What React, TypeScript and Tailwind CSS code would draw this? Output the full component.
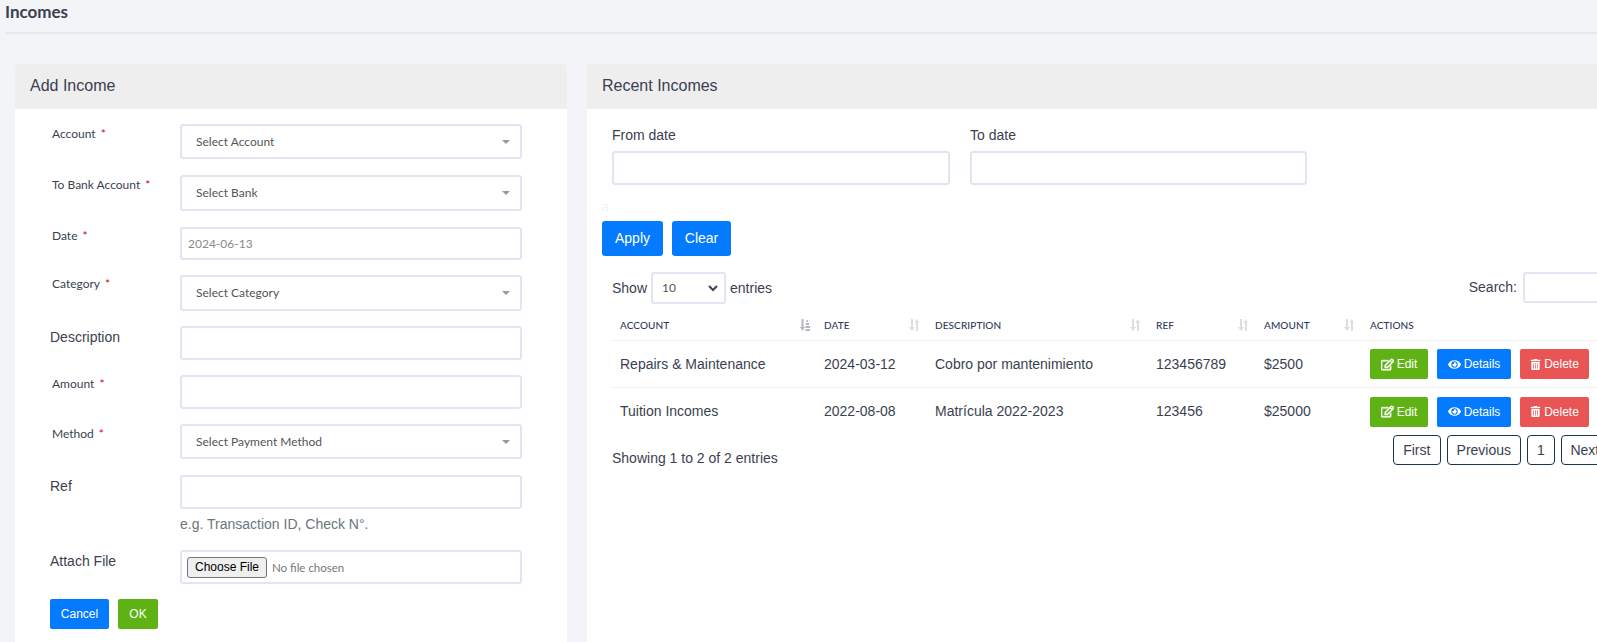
import { FaRegEdit, FaEye, FaTrashAlt } from "react-icons/fa";

const lato = "font-['Lato','Liberation_Sans',sans-serif]";
const arial = "font-['Liberation_Sans',Arial,sans-serif]";
const fieldBox = "w-[342px] rounded-[3px] border-2 border-[#e1e5f1] bg-white";

function SelectBox({ label, className }: { label: string; className: string }) {
  return (
    <div className={`${fieldBox} ${className} flex items-center justify-between pl-[14px] pr-[10px] text-[12px] text-[#555] ${lato}`}>
      <span>{label}</span>
      <span className="h-0 w-0 border-x-[4px] border-t-[4px] border-x-transparent border-t-[#999]" />
    </div>
  );
}

function Required({ label, tight }: { label: string; tight?: boolean }) {
  return (
    <div className={`pl-[2px] text-[12px] leading-[18px] text-[#3a3f51] ${tight ? "" : "pt-[1px]"} ${lato}`}>
      {label}
      <span className="ml-[5px] text-[#d0021b]">*</span>
    </div>
  );
}

function PlainLabel({ label }: { label: string }) {
  return <div className={`pt-[1px] text-[14px] leading-[21px] text-[#3a3f51] ${arial}`}>{label}</div>;
}

function SortIcon({ active }: { active?: boolean }) {
  if (active) {
    return (
      <svg width="10" height="12" viewBox="0 0 10 12" className="text-[#b4b7c0]" fill="currentColor">
        <path d="M1.500 0h2v8H5l-2.500 4L0 8h1.500z" />
        <path d="M6.500 1h1.500v2H6.500zM6 4h3v2H6zM5.500 7H10v2H5.500zM5.500 10H10v2H5.500z" />
      </svg>
    );
  }
  return (
    <svg width="10" height="12" viewBox="0 0 10 12" className="text-[#dcdee4]" fill="currentColor">
      <path d="M2 0h2v8h2l-3 4-3-4h2z" />
      <path d="M7 12h2V4h1L8 0 5.500 4H7z" />
    </svg>
  );
}

const columns = [
  { name: "ACCOUNT", width: "w-[204px]", pad: "pr-[14px]", active: true },
  { name: "DATE", width: "w-[111px]", pad: "pr-[16px]" },
  { name: "DESCRIPTION", width: "w-[221px]", pad: "pr-[16px]" },
  { name: "REF", width: "w-[108px]", pad: "pr-[16px]" },
  { name: "AMOUNT", width: "w-[106px]", pad: "pr-[16px]" },
];

const rows = [
  ["Repairs & Maintenance", "2024-03-12", "Cobro por mantenimiento", "123456789", "$2500"],
  ["Tuition Incomes", "2022-08-08", "Matrícula 2022-2023", "123456", "$25000"],
];

const cellWidths = ["w-[204px]", "w-[111px]", "w-[221px]", "w-[108px]", "w-[106px]"];

function ActionButtons() {
  return (
    <div className={`flex gap-[9px] text-[12px] text-white ${arial}`}>
      <button className="flex h-[30px] w-[58px] items-center justify-center gap-[3px] rounded-[2px] bg-[#5eb213]">
        <FaRegEdit className="text-[13px]" stroke="currentColor" strokeWidth={24} />
        Edit
      </button>
      <button className="flex h-[30px] w-[74px] items-center justify-center gap-[3px] rounded-[2px] bg-[#047bfe]">
        <FaEye className="text-[13px]" />
        Details
      </button>
      <button className="flex h-[30px] w-[69px] items-center justify-center gap-[3px] rounded-[2px] bg-[#e95555]">
        <FaTrashAlt className="text-[11px]" />
        Delete
      </button>
    </div>
  );
}

function PageButton({ label, className }: { label: string; className: string }) {
  return (
    <button className={`h-[30px] rounded-[4px] border border-[#1c3550] text-[14px] text-[#3a3f51] ${className}`}>
      {label}
    </button>
  );
}

export default function App() {
  return (
    <div className={`h-[642px] w-[1597px] overflow-hidden bg-[#f2f4f8] ${arial}`}>
      <div className="ml-[5px] h-[34px] border-b-2 border-[#e6e8ee] pt-[2px]">
        <h1 className={`text-[17px] leading-[20px] font-bold text-[#3a3f51] ${lato}`}>Incomes</h1>
      </div>

      <div className="mt-[30px] flex gap-[20px] pl-[15px]">
        {/* left card */}
        <div className="h-[600px] w-[552px] shrink-0 rounded-t-[3px] bg-white">
          <div className="flex h-[45px] items-center rounded-t-[3px] bg-[#eeeeee] pb-[2px] pl-[15px] text-[16px] text-[#3a3f51]">
            Add Income
          </div>
          <div className="px-[35px] pt-[15px]">
            <div className="flex h-[51px]">
              <div className="w-[130px]"><Required label="Account" /></div>
              <SelectBox label="Select Account" className="h-[35px]" />
            </div>
            <div className="flex h-[52px]">
              <div className="w-[130px]"><Required label="To Bank Account" /></div>
              <SelectBox label="Select Bank" className="h-[36px]" />
            </div>
            <div className="flex h-[48px]">
              <div className="w-[130px]"><Required label="Date" tight /></div>
              <div className={`${fieldBox} flex h-[33px] items-center pl-[6px] text-[12px] text-[#8a8a8a] ${lato}`}>2024-06-13</div>
            </div>
            <div className="flex h-[51px]">
              <div className="w-[130px]"><Required label="Category" tight /></div>
              <SelectBox label="Select Category" className="h-[36px]" />
            </div>
            <div className="flex h-[49px]">
              <div className="w-[130px]"><PlainLabel label="Description" /></div>
              <div className={`${fieldBox} h-[34px]`} />
            </div>
            <div className="flex h-[49px]">
              <div className="w-[130px]"><Required label="Amount" tight /></div>
              <div className={`${fieldBox} h-[34px]`} />
            </div>
            <div className="flex h-[51px]">
              <div className="w-[130px]"><Required label="Method" /></div>
              <SelectBox label="Select Payment Method" className="h-[35px]" />
            </div>
            <div className="flex h-[75px]">
              <div className="w-[130px]"><PlainLabel label="Ref" /></div>
              <div>
                <div className={`${fieldBox} h-[34px]`} />
                <div className="mt-[5px] text-[14px] leading-[21px] text-[#6c757d]">e.g. Transaction ID, Check N°.</div>
              </div>
            </div>
            <div className="flex h-[49px]">
              <div className="w-[130px]"><PlainLabel label="Attach File" /></div>
              <div className={`${fieldBox} flex h-[34px] items-center pl-[5px] text-[#777] ${lato}`}>
                <input type="file" className={`w-[220px] text-[11.5px] file:mr-[5px] file:h-[21px] file:w-[80px] file:rounded-[3px] file:border file:border-[#767676] file:bg-[#efefef] file:font-['Liberation_Sans'] file:text-[12px] file:text-black ${lato}`} />
              </div>
            </div>
            <div className="flex gap-[9px] text-[12px] text-white">
              <button className="h-[30px] w-[59px] rounded-[2px] bg-[#047bfe]">Cancel</button>
              <button className="h-[30px] w-[40px] rounded-[2px] bg-[#5eb213]">OK</button>
            </div>
          </div>
        </div>

        {/* right card */}
        <div className="h-[600px] w-[1040px] shrink-0 rounded-t-[3px] bg-white">
          <div className="flex h-[45px] items-center bg-[#eeeeee] pb-[2px] pl-[15px] text-[16px] text-[#3a3f51]">
            Recent Incomes
          </div>
          <div className="pl-[25px] pt-[16px] text-[14px] text-[#3a3f51]">
            <div className="flex gap-[20px]">
              <div>
                <div className="h-[26px] leading-[21px]">From date</div>
                <div className="h-[34px] w-[338px] rounded-[3px] border-2 border-[#e1e5f1]" />
              </div>
              <div>
                <div className="h-[26px] leading-[21px]">To date</div>
                <div className="h-[34px] w-[337px] rounded-[3px] border-2 border-[#e1e5f1]" />
              </div>
            </div>
          </div>
          <div className="pl-[15px]">
            <div className="mt-[13px] h-[23px] text-[12px] leading-[18px] text-[#e8f2ff]">a</div>
            <div className="flex gap-[9px] text-[14px] text-white">
              <button className="h-[35px] w-[61px] rounded-[3px] bg-[#047bfe]">Apply</button>
              <button className="h-[35px] w-[59px] rounded-[3px] bg-[#047bfe]">Clear</button>
            </div>
          </div>
          <div className="mt-[16px] pl-[25px] text-[14px] text-[#3a3f51]">
            <div className="flex h-[32px] w-[990px] items-center">
              <span>Show</span>
              <div className="relative mx-[4px]">
                <select className={`block h-[32px] w-[75px] appearance-none rounded-[3px] border-2 border-[#e1e5f1] bg-white pl-[9px] text-[12px] text-[#555] ${lato}`} defaultValue="10">
                  <option>10</option>
                </select>
                <svg width="10" height="7" viewBox="0 0 10 7" className="pointer-events-none absolute right-[8px] top-[13px]" fill="none" stroke="#444" strokeWidth="2">
                  <path d="M1 1l4 4 4-4" />
                </svg>
              </div>
              <span>entries</span>
              <span className="mb-[2px] ml-auto">Search:</span>
              <div className="mb-[2px] ml-[6px] h-[31px] w-[79px] rounded-[3px] border-2 border-[#e1e5f1]" />
            </div>
            <div className={`mt-[5px] flex h-[32px] items-center border-b border-[#eff0f3] pl-[8px] pt-[1px] text-[10px] font-medium tracking-[0.1px] text-[#2f3a5c] ${lato}`}>
              {columns.map((col) => (
                <div key={col.name} className={`flex items-center justify-between ${col.width} ${col.pad}`}>
                  <span>{col.name}</span>
                  <SortIcon active={col.active} />
                </div>
              ))}
              <div>ACTIONS</div>
            </div>
            {rows.map((row, index) => (
              <div key={row[0]} className={`flex h-[47px] items-center pl-[8px] ${index === 0 ? "border-b border-[#eff0f3]" : ""}`}>
                {row.map((cell, i) => (
                  <div key={cell} className={cellWidths[i]}>{cell}</div>
                ))}
                <ActionButtons />
              </div>
            ))}
            <div className="flex items-start">
              <div className="pt-[13px] leading-[21px]">Showing 1 to 2 of 2 entries</div>
              <div className="ml-[615px] flex shrink-0 gap-[6px]">
                <PageButton label="First" className="w-[48px]" />
                <PageButton label="Previous" className="w-[74px]" />
                <PageButton label="1" className="w-[28px]" />
                <PageButton label="Next" className="w-[48px]" />
              </div>
            </div>
          </div>
        </div>
      </div>
    </div>
  );
}
